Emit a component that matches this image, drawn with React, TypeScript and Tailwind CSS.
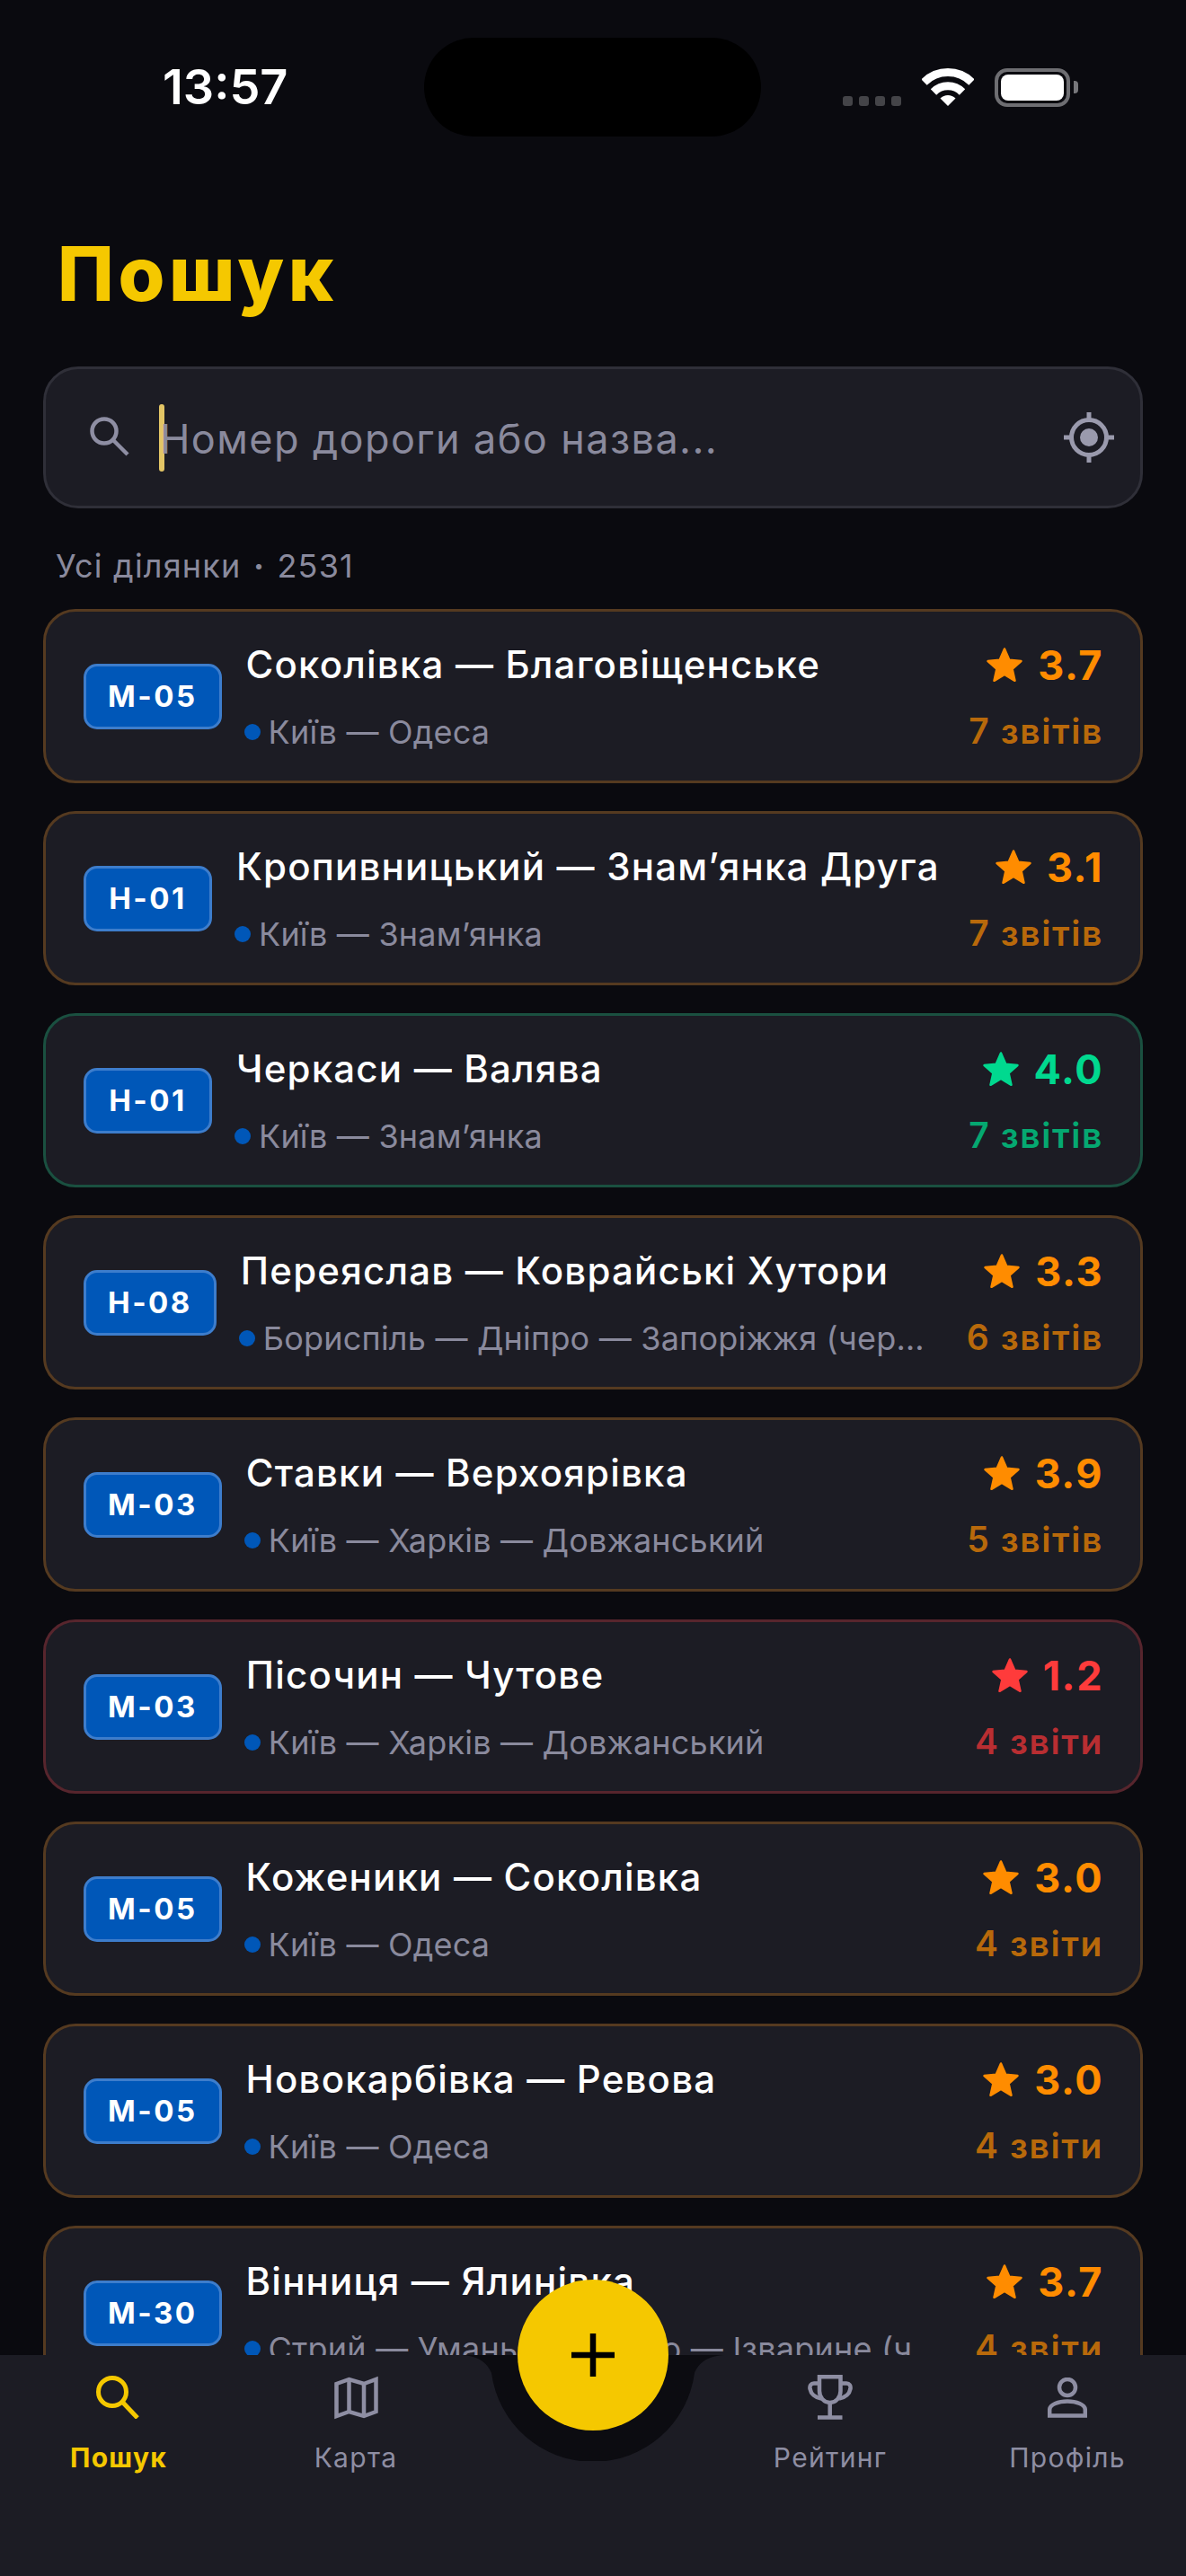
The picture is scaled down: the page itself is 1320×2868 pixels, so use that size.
const sections = [
  { road: "М-05", title: "Соколівка — Благовіщенське", route: "Київ — Одеса", rating: "3.7", reports: "7 звітів", tone: "orange" },
  { road: "Н-01", title: "Кропивницький — Знамʼянка Друга", route: "Київ — Знамʼянка", rating: "3.1", reports: "7 звітів", tone: "orange" },
  { road: "Н-01", title: "Черкаси — Валява", route: "Київ — Знамʼянка", rating: "4.0", reports: "7 звітів", tone: "green" },
  { road: "Н-08", title: "Переяслав — Коврайські Хутори", route: "Бориспіль — Дніпро — Запоріжжя (через Кременчук)", rating: "3.3", reports: "6 звітів", tone: "orange" },
  { road: "М-03", title: "Ставки — Верхоярівка", route: "Київ — Харків — Довжанський", rating: "3.9", reports: "5 звітів", tone: "orange" },
  { road: "М-03", title: "Пісочин — Чутове", route: "Київ — Харків — Довжанський", rating: "1.2", reports: "4 звіти", tone: "red" },
  { road: "М-05", title: "Коженики — Соколівка", route: "Київ — Одеса", rating: "3.0", reports: "4 звіти", tone: "orange" },
  { road: "М-05", title: "Новокарбівка — Ревова", route: "Київ — Одеса", rating: "3.0", reports: "4 звіти", tone: "orange" },
  { road: "М-30", title: "Вінниця — Ялинівка", route: "Стрий — Умань — Дніпро — Ізварине (через Кропивницький)", rating: "3.7", reports: "4 звіти", tone: "orange" },
];

const tones: Record<string, { border: string; rating: string; reports: string }> = {
  orange: { border: "border-[#553a20]", rating: "text-[#ff8c00]", reports: "text-[#b8690b]" },
  green: { border: "border-[#1a5040]", rating: "text-[#00d98f]", reports: "text-[#05a871]" },
  red: { border: "border-[#57252d]", rating: "text-[#ff3b3b]", reports: "text-[#b92e32]" },
};

const Star = () => (
  <svg viewBox="0 0 42 42" className="w-[42px] h-[42px] shrink-0" fill="currentColor" stroke="currentColor" strokeWidth="2.5" strokeLinejoin="round">
    <polygon points="21,2.5 26.3,14.7 39.5,16 29.6,24.8 32.5,37.8 21,31 9.5,37.8 12.4,24.8 2.5,16 15.7,14.7" />
  </svg>
);

const StatusBar = () => (
  <div className="flex items-center h-[110px] mt-[42px] pl-[181px] pr-[120px]">
    <span className="w-[291px] text-[54px] leading-none font-semibold text-white">13:57</span>
    <div className="w-[376px] h-[110px] rounded-full bg-black" />
    <div className="flex items-center ml-[91px]">
      <div className="flex gap-[7px] self-end mb-[1px]">
        <span className="w-[11px] h-[11px] rounded-[3px] bg-[#444448]" />
        <span className="w-[11px] h-[11px] rounded-[3px] bg-[#444448]" />
        <span className="w-[11px] h-[11px] rounded-[3px] bg-[#444448]" />
        <span className="w-[11px] h-[11px] rounded-[3px] bg-[#444448]" />
      </div>
      <svg viewBox="0 0 58 42" className="w-[58px] h-[42px] ml-[23px]" fill="none" stroke="#fff" strokeWidth="9">
        <path d="M2.5 15.5A37.5 37.5 0 0 1 55.5 15.5" />
        <path d="M13 26.5A22.5 22.5 0 0 1 45 26.5" />
        <path d="M20.5 33.5L29 42L37.5 33.5A12 12 0 0 0 20.5 33.5Z" fill="#fff" stroke="none" />
      </svg>
      <div className="flex items-center ml-[23px]">
        <div className="w-[84px] h-[43px] rounded-[14px] border-[4px] border-[#6e6e72] p-[3px]">
          <div className="w-full h-full rounded-[8px] bg-white" />
        </div>
        <div className="w-[5px] h-[14px] ml-[4px] rounded-r-[4px] bg-[#77777b]" />
      </div>
    </div>
  </div>
);

const SearchBox = () => (
  <div className="flex items-center h-[158px] rounded-[39px] border-[3px] border-[#2f2f38] bg-[#1c1c24] pl-[49px] pr-[29px]">
    <svg viewBox="0 0 46 46" className="w-[46px] h-[46px] shrink-0" fill="none" stroke="#8e8ea3" strokeWidth="4.5">
      <circle cx="16" cy="16" r="13.5" />
      <path d="M26 26L42 42" />
    </svg>
    <div className="w-[6px] h-[75px] ml-[31px] rounded-full bg-[#e3c565] shrink-0" />
    <div className="flex-1 -ml-[5px] text-[45px] leading-none tracking-[1.4px] text-[#8a8a9d] mt-[2px]">Номер дороги або назва...</div>
    <svg viewBox="0 0 56 56" className="w-[56px] h-[56px] shrink-0" fill="none" stroke="#9a9aad" strokeWidth="5">
      <circle cx="28" cy="28" r="19.5" />
      <circle cx="28" cy="28" r="10" fill="#9a9aad" stroke="none" />
      <path d="M28 0V9M28 47V56M0 28H9M47 28H56" />
    </svg>
  </div>
);

const SectionCard = ({ item }: { item: (typeof sections)[number] }) => {
  const tone = tones[item.tone];
  return (
    <div className={`flex items-center h-[194px] rounded-[36px] border-[3px] bg-[#1c1c24] pl-[42px] pr-[41px] ${tone.border}`}>
      <div className="flex items-center justify-center min-w-[143px] h-[73px] px-[24px] rounded-[15px] border-[3px] border-[#3d7dcc] bg-[#0057b8] text-[33px] leading-none font-bold tracking-[2.5px] text-white shrink-0">
        {item.road}
      </div>
      <div className="flex flex-col gap-[24px] flex-1 min-w-0 ml-[25px] mt-[2px]">
        <div className="h-[54px] leading-[54px] text-[42px] font-medium tracking-[1.2px] text-white truncate pl-[2px]">{item.title}</div>
        <div className="flex items-center h-[48px] pr-[12px]">
          <span className="w-[18px] h-[18px] rounded-full bg-[#0057b8] shrink-0" />
          <span className="ml-[9px] text-[36px] leading-[48px] tracking-[0.2px] text-[#8a8a9d] truncate">{item.route}</span>
        </div>
      </div>
      <div className="flex flex-col items-end gap-[22px] ml-[24px] mt-[1px] shrink-0">
        <div className={`flex items-center gap-[16px] h-[54px] text-[45px] font-bold tracking-[1.5px] ${tone.rating}`}>
          <Star />
          {item.rating}
        </div>
        <div className={`h-[48px] leading-[48px] text-[39px] font-semibold tracking-[1.6px] ${tone.reports}`}>{item.reports}</div>
      </div>
    </div>
  );
};

const NavItem = ({ label, active, children }: { label: string; active?: boolean; children: React.ReactNode }) => (
  <div className="flex flex-col items-center">
    <div className="flex items-center justify-center h-[50px]">{children}</div>
    <span className={`mt-[20px] text-[30px] leading-[44px] tracking-[1.3px] ${active ? "font-bold text-[#f5c800]" : "text-[#8e8ea3]"}`}>{label}</span>
  </div>
);

const BottomNav = () => (
  <nav className="relative grid grid-cols-5 shrink-0 h-[246px] pt-[22px] bg-[#1c1c24]">
    <NavItem label="Пошук" active>
      <svg viewBox="0 0 48 48" className="w-[48px] h-[48px] -ml-[2px]" fill="none" stroke="#f5c800" strokeWidth="5">
        <circle cx="18" cy="18" r="15.5" />
        <path d="M29 29L46 47" />
      </svg>
    </NavItem>
    <NavItem label="Карта">
      <svg viewBox="0 0 49 49" className="w-[49px] h-[49px]" fill="none" stroke="#8e8ea3" strokeWidth="4.5">
        <path d="M2.5 9L16.5 4L33 9L46.5 4V40L33 45L16.5 40L2.5 45Z" />
        <path d="M16.5 4V40M33 9V45" />
      </svg>
    </NavItem>
    <div />
    <NavItem label="Рейтинг">
      <svg viewBox="0 0 50 50" className="w-[50px] h-[50px]" fill="none" stroke="#8e8ea3" strokeWidth="4.5">
        <path d="M13 2.2H36.5V18C36.5 25 31.5 31 24.7 31C18 31 13 25 13 18Z" />
        <path d="M13 9.5H7C3.5 9.5 2 12 2.5 15.5C3.5 21 8 25.5 15 26.5" />
        <path d="M36.5 9.5H43C46.5 9.5 48 12 47.5 15.5C46.5 21 42 25.5 35 26.5" />
        <path d="M24.7 31V46" />
        <path d="M11 47.5H38.5" />
      </svg>
    </NavItem>
    <NavItem label="Профіль">
      <svg viewBox="0 0 44 45" className="w-[44px] h-[45px]" fill="none" stroke="#8e8ea3" strokeWidth="4.5">
        <circle cx="22" cy="11" r="9" />
        <path d="M2.2 42.5V36C2.2 30 12 26.5 22 26.5C32 26.5 41.8 30 41.8 36V42.5Z" />
      </svg>
    </NavItem>
    <svg viewBox="0 0 320 118" className="absolute left-[500px] top-0 w-[320px] h-[118px]" fill="#0c0c11">
      <path d="M10 0C32 0 42 8 47 20A114 114 0 0 0 273 20C278 8 288 0 310 0Z" />
    </svg>
    <button className="absolute left-[576px] -top-[84px] flex items-center justify-center w-[168px] h-[168px] rounded-full bg-[#f5c800]">
      <svg viewBox="0 0 48 48" className="w-[48px] h-[48px]" fill="none" stroke="#000" strokeWidth="6.5">
        <path d="M24 0V48M0 24H48" />
      </svg>
    </button>
  </nav>
);

export default function App() {
  return (
    <div className="flex flex-col w-[1320px] h-[2868px] overflow-hidden bg-[#0a0a0f] font-[Inter,sans-serif]">
      <StatusBar />
      <div className="flex flex-col flex-1 min-h-0 overflow-hidden px-[48px]">
        <h1 className="mt-[103px] ml-[16px] h-[100px] text-[84px] leading-[100px] font-extrabold tracking-[4.5px] text-[#f5c800]">Пошук</h1>
        <div className="mt-[53px]">
          <SearchBox />
        </div>
        <div className="mt-[42px] ml-[14px] h-[44px] text-[36px] leading-[44px] tracking-[1.2px] text-[#8a8a9d]">
          Усі ділянки <span className="px-[2px] font-bold">·</span> 2531
        </div>
        <div className="flex flex-col gap-[31px] mt-[26px]">
          {sections.map((item, i) => (
            <SectionCard key={i} item={item} />
          ))}
        </div>
      </div>
      <BottomNav />
    </div>
  );
}
